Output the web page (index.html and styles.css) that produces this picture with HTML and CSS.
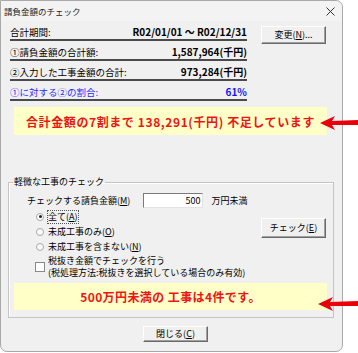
FILE: index.html
```html
<!DOCTYPE html>
<html lang="ja">
<head>
  <meta charset="UTF-8" />
  <title>請負金額のチェック</title>
  <meta name="viewport" content="width=device-width, initial-scale=1.0" />
  <link rel="stylesheet" href="styles.css">
</head>
<body>
  <div class="dialog">
    <div class="titlebar">
      <span class="title">請負金額のチェック</span>
      <svg class="close" width="9" height="9" viewBox="0 0 9 9"><path d="M0.5 0.5 L8.5 8.5 M8.5 0.5 L0.5 8.5" stroke="#333" stroke-width="1" fill="none"/></svg>
    </div>

    <!-- summary rows -->
    <div class="summary">
      <div class="rows">
        <div class="row"><span>合計期間:</span><b>R02/01/01 ～ R02/12/31</b></div>
        <div class="row"><span>①請負金額の合計額:</span><b>1,587,964(千円)</b></div>
        <div class="row"><span>②入力した工事金額の合計:</span><b>973,284(千円)</b></div>
        <div class="row blue"><span>①に対する②の割合:</span><b>61%</b></div>
      </div>
      <button class="btn btn-change">変更(<u>N</u>)...</button>
    </div>

    <div class="notice notice-top">合計金額の7割まで 138,291(千円) 不足しています</div>

    <!-- small works check -->
    <fieldset class="group">
      <legend>軽微な工事のチェック</legend>
      <div class="amount-line">
        <span>チェックする請負金額(<u>M</u>)</span>
        <span class="field">500</span>
        <span>万円未満</span>
      </div>
      <div class="options">
        <div class="radios">
          <div class="radio"><span class="dot on"></span><span class="focus">全て(<u>A</u>)</span></div>
          <div class="radio"><span class="dot"></span><span>未成工事のみ(<u>O</u>)</span></div>
          <div class="radio"><span class="dot"></span><span>未成工事を含まない(<u>N</u>)</span></div>
        </div>
        <button class="btn btn-check">チェック(<u>E</u>)</button>
      </div>
      <div class="taxcheck">
        <span class="box"></span>
        <span class="taxtext">
          <span class="line">税抜き金額でチェックを行う</span>
          <span class="line">(税処理方法:税抜きを選択している場合のみ有効)</span>
        </span>
      </div>
      <div class="notice notice-bottom">500万円未満の 工事は4件です。</div>
    </fieldset>

    <div class="footer">
      <button class="btn btn-close">閉じる(<u>C</u>)</button>
    </div>
  </div>

  <!-- red pointer arrows -->
  <svg class="arrow arrow-one" width="40" height="20" viewBox="0 0 40 20"><polygon points="2,10 17,3 14,8 40,7 40,12 14,12 17,17" fill="#e8000b"/></svg>
  <svg class="arrow arrow-two" width="42" height="20" viewBox="0 0 42 20"><polygon points="2,10 17,3 14,8 42,7 42,12 14,12 17,17" fill="#e8000b"/></svg>
</body>
</html>
```

FILE: styles.css
```css
body { margin: 0; width: 358px; height: 353px; position: relative; overflow: hidden; background: #fff; font-family: "Noto Sans CJK JP", sans-serif; font-size: 9.5px; color: #000; }
u { text-decoration: underline; text-underline-offset: 1px; }

.dialog { width: 341px; height: 350px; border: 1px solid #a9a9a9; border-radius: 0 7px 7px 7px; background: #f0f0f0; }

.titlebar { height: 20px; display: flex; align-items: center; justify-content: space-between; padding: 0 7px 0 3px; background: #f3f3f3; border-radius: 0 7px 0 0; }
.title { font-size: 8.5px; line-height: 12px; color: #222; }

.summary { display: flex; align-items: flex-start; padding-left: 9px; }
.rows { width: 237px; }
.row { display: flex; align-items: flex-end; justify-content: space-between; border-bottom: 2px solid #4a4a4a; font-size: 9.5px; line-height: 12px; padding-bottom: 1px; height: 17px; }
.row b { font-weight: bold; font-size: 10px; }
.row.blue { color: #2a2aff; }
.row.blue b { color: #1010ff; }

.btn { font-family: inherit; font-size: 9px; line-height: 12px; padding: 0; color: #000; background: #f0f0f0; border: 1px solid; border-color: #fff #6a6a6a #6a6a6a #fff; box-shadow: inset -1px -1px #a0a0a0; }
.btn-change { width: 65px; height: 18px; margin: 5px 0 0 14px; }

.notice { background: #ffffc8; color: #f01414; font-weight: bold; font-size: 12px; text-align: center; display: flex; align-items: center; justify-content: center; }
.notice-top { width: 313px; height: 28px; margin: 6px 0 0 13px; letter-spacing: 0.6px; }

.group { margin: 41px 0 0 7px; width: 324px; padding: 0 0 7px; border: 1px solid #c4c4c4; box-shadow: 1px 1px #fff inset; font-size: 9px; }
.group legend { padding: 0 1px; margin-left: 4px; line-height: 12px; }

.amount-line { display: flex; align-items: center; margin: 5px 0 0 18px; height: 15px; line-height: 12px; }
.field { width: 56px; height: 13px; margin: 0 8px 0 13px; padding-right: 2px; background: #fff; border: 1px solid; border-color: #7a7a7a #e3e3e3 #e3e3e3 #7a7a7a; text-align: right; line-height: 13px; }

.options { display: flex; justify-content: space-between; align-items: flex-start; margin-top: 1px; }
.radios { padding-left: 27px; }
.radio { display: flex; align-items: center; height: 15px; line-height: 12px; }
.dot { width: 6px; height: 6px; border: 1px solid #a8a8a8; border-radius: 50%; background: #fff; margin-right: 4px; position: relative; }
.dot.on::after { content: ""; position: absolute; left: 1.5px; top: 1.5px; width: 3px; height: 3px; border-radius: 50%; background: #222; }
.focus { outline: 1px dotted #555; outline-offset: 0; }
.btn-check { width: 65px; height: 20px; margin: 9px 7px 0 0; }

.taxcheck { display: flex; align-items: center; margin: 1px 0 0 26px; }
.box { width: 8px; height: 8px; border: 1px solid #8a8a8a; background: #fff; margin-right: 3px; }
.taxtext { display: flex; flex-direction: column; }
.taxtext .line { line-height: 11.5px; }

.notice-bottom { width: 313px; height: 27px; margin: 5px 0 0 5px; letter-spacing: 0.4px; }

.footer { display: flex; padding-left: 142px; margin-top: 8px; }
.btn-close { width: 65px; height: 16px; }

.arrow { position: absolute; }
.arrow-one { left: 318px; top: 113px; }
.arrow-two { left: 316px; top: 294px; }
```
